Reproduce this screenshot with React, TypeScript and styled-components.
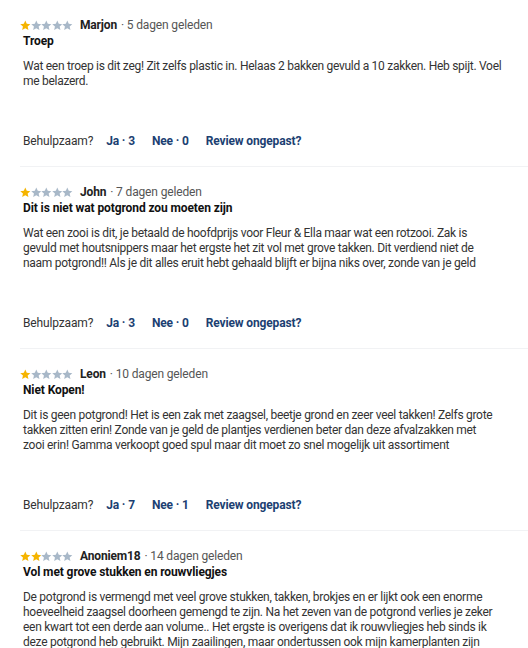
import React from "react";
import styled, { createGlobalStyle } from "styled-components";

const Global = createGlobalStyle`
  html, body { margin: 0; padding: 0; background: #fff; }
  body { font-family: Roboto, "Liberation Sans", sans-serif; color: #333; }
`;

const Page = styled.div`
  width: 528px;
  height: 648px;
  overflow: hidden;
`;

const Review = styled.section`
  margin-left: 20px;
  padding-top: 18px;
  padding-bottom: 17px;
  border-bottom: 1px solid #f1f2f4;
`;

const Header = styled.div`
  display: flex;
  align-items: center;
  height: 14px;
  font-size: 12px;
  line-height: 14px;
  letter-spacing: -0.15px;
`;

const Stars = styled.div`
  display: flex;
  gap: 0;
  margin-right: 7px;
`;

const Name = styled.span`
  font-weight: 700;
  color: #222;
  margin-right: 4px;
`;

const Date = styled.span`
  color: #555;
`;

const Title = styled.h3`
  margin: 2px 0 0 3px;
  font-size: 12px;
  line-height: 15px;
  font-weight: 700;
  color: #111;
  letter-spacing: -0.1px;
`;

const Body = styled.p`
  margin: 10px 0 0 3px;
  width: 502px;
  font-size: 12px;
  line-height: 15px;
  color: #333;
  letter-spacing: -0.28px;
`;

const Line = styled.span`
  display: block;
  white-space: nowrap;
`;

const Helpful = styled.div`
  display: flex;
  align-items: center;
  margin: 45px 0 0 3px;
  font-size: 12px;
  line-height: 15px;
  gap: 17px;
  letter-spacing: -0.15px;
`;

const Label = styled.span`
  color: #333;
  margin-right: -4px;
`;

const Link = styled.span`
  color: #1c3f72;
  font-weight: 700;
`;

const Star = ({ filled }: { filled: boolean }) => (
  <svg width="10.6" height="11" viewBox="0 0 24 24">
    <path
      d="M12 0.8l3.3 7.4 8.1.8-6.1 5.4 1.8 8L12 18.2l-7.1 4.2 1.8-8L0.6 9l8.1-.8z"
      fill={filled ? "#f5b400" : "#a8b8c8"}
    />
  </svg>
);

type R = {
  rating: number;
  name: string;
  date: string;
  title: string;
  body: string[];
  ja: number;
  nee: number;
};

const reviews: R[] = [
  {
    rating: 1,
    name: "Marjon",
    date: "5 dagen geleden",
    title: "Troep",
    body: [
      "Wat een troep is dit zeg! Zit zelfs plastic in. Helaas 2 bakken gevuld a 10 zakken. Heb spijt. Voel",
      "me belazerd.",
    ],
    ja: 3,
    nee: 0,
  },
  {
    rating: 1,
    name: "John",
    date: "7 dagen geleden",
    title: "Dit is niet wat potgrond zou moeten zijn",
    body: [
      "Wat een zooi is dit, je betaald de hoofdprijs voor Fleur & Ella maar wat een rotzooi. Zak is",
      "gevuld met houtsnippers maar het ergste het zit vol met grove takken. Dit verdiend niet de",
      "naam potgrond!! Als je dit alles eruit hebt gehaald blijft er bijna niks over, zonde van je geld",
    ],
    ja: 3,
    nee: 0,
  },
  {
    rating: 1,
    name: "Leon",
    date: "10 dagen geleden",
    title: "Niet Kopen!",
    body: [
      "Dit is geen potgrond! Het is een zak met zaagsel, beetje grond en zeer veel takken! Zelfs grote",
      "takken zitten erin! Zonde van je geld de plantjes verdienen beter dan deze afvalzakken met",
      "zooi erin! Gamma verkoopt goed spul maar dit moet zo snel mogelijk uit assortiment",
    ],
    ja: 7,
    nee: 1,
  },
  {
    rating: 2,
    name: "Anoniem18",
    date: "14 dagen geleden",
    title: "Vol met grove stukken en rouwvliegjes",
    body: [
      "De potgrond is vermengd met veel grove stukken, takken, brokjes en er lijkt ook een enorme",
      "hoeveelheid zaagsel doorheen gemengd te zijn. Na het zeven van de potgrond verlies je zeker",
      "een kwart tot een derde aan volume.. Het ergste is overigens dat ik rouwvliegjes heb sinds ik",
      "deze potgrond heb gebruikt. Mijn zaailingen, maar ondertussen ook mijn kamerplanten zijn",
      "aangetast.",
    ],
    ja: 2,
    nee: 0,
  },
];

export default function App() {
  return (
    <Page>
      <Global />
      {reviews.map((r, i) => (
        <Review key={i}>
          <Header>
            <Stars>
              {[0, 1, 2, 3, 4].map((s) => (
                <Star key={s} filled={s < r.rating} />
              ))}
            </Stars>
            <Name>{r.name}</Name>
            <Date>· {r.date}</Date>
          </Header>
          <Title>{r.title}</Title>
          <Body>
            {r.body.map((l, j) => (
              <Line key={j}>{l}</Line>
            ))}
          </Body>
          <Helpful>
            <Label>Behulpzaam?</Label>
            <Link>Ja · {r.ja}</Link>
            <Link>Nee · {r.nee}</Link>
            <Link>Review ongepast?</Link>
          </Helpful>
        </Review>
      ))}
    </Page>
  );
}
